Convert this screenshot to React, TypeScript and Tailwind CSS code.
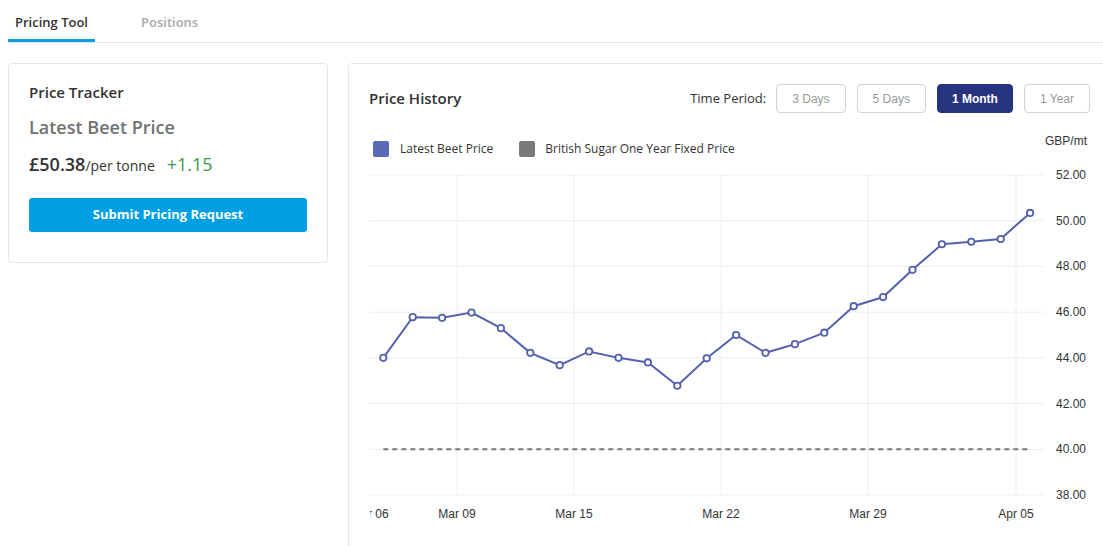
import React from 'react'

const prices = [
  44.0, 45.78, 45.75, 45.98, 45.3, 44.22, 43.68, 44.28, 44.0, 43.8, 42.78, 43.98, 45.0, 44.22,
  44.6, 45.1, 46.26, 46.66, 47.85, 48.97, 49.08, 49.2, 50.34,
]

const yTicks = [52, 50, 48, 46, 44, 42, 40, 38]
const xTicks = [
  { label: 'Mar 06', x: 0 },
  { label: 'Mar 09', x: 88 },
  { label: 'Mar 15', x: 205 },
  { label: 'Mar 22', x: 352 },
  { label: 'Mar 29', x: 499 },
  { label: 'Apr 05', x: 647 },
]

// plot area: left 369, top 174 in page coords
const W = 675
const H = 320
const yOf = (v: number) => ((52 - v) / 14) * H
const xOf = (i: number) => 14.3 + i * 29.4

function PriceChart() {
  const path = prices.map((p, i) => `${i === 0 ? 'M' : 'L'} ${xOf(i)},${yOf(p)}`).join(' ')
  return (
    <div className="relative h-[360px] w-[740px] font-['Liberation_Sans',Arial,sans-serif] text-[12px] text-[#333]">
      <span className="absolute left-[676px] top-[-40px] leading-none">GBP/mt</span>
      <svg width={W} height={H + 2} className="absolute left-0 top-0 overflow-visible">
        {yTicks.map((t) => (
          <line key={t} x1={0} x2={W} y1={yOf(t)} y2={yOf(t)} stroke="#eeeeee" strokeWidth="1" />
        ))}
        {xTicks.slice(1).map((t) => (
          <line key={t.label} x1={t.x} x2={t.x} y1={0} y2={H} stroke="#eeeeee" strokeWidth="1" />
        ))}
        <line x1={xOf(0)} x2={xOf(prices.length - 1)} y1={yOf(40)} y2={yOf(40)} stroke="#777" strokeWidth="2" strokeDasharray="5 4" />
        <path d={path} fill="none" stroke="#5462ad" strokeWidth="2" />
        {prices.map((p, i) => (
          <circle key={i} cx={xOf(i)} cy={yOf(p)} r="3.2" fill="#fff" stroke="#5462ad" strokeWidth="1.8" />
        ))}
      </svg>
      {yTicks.map((t) => (
        <span key={t} className="absolute left-[687px] leading-none" style={{ top: yOf(t) - 6 }}>
          {t.toFixed(2)}
        </span>
      ))}
      <div className="absolute left-[1px] top-[333px] h-[16px] w-[700px] overflow-hidden">
        {xTicks.map((t) => (
          <span
            key={t.label}
            className="absolute top-0 -translate-x-1/2 whitespace-nowrap leading-none"
            style={{ left: t.x === 0 ? 0 : t.x - 1 }}
          >
            {t.label}
          </span>
        ))}
      </div>
    </div>
  )
}

export default function App() {
  const periods = ['3 Days', '5 Days', '1 Month', '1 Year']
  return (
    <div className="h-[546px] w-[1103px] overflow-hidden bg-white font-['Open_Sans',sans-serif] text-[#333]">
      {/* tabs */}
      <div className="ml-2 flex h-[43px] border-b border-[#e8e8e8]">
        <div className="flex h-full w-[87px] items-center justify-center border-b-[3px] border-[#0a9be0] pt-[6px] text-[13px] font-semibold text-[#333]">
          Pricing Tool
        </div>
        <div className="flex h-full items-center pl-[46px] pt-[3px] text-[13px] font-semibold text-[#aaa]">Positions</div>
      </div>

      <div className="flex gap-[20px] pl-2 pt-5">
        {/* left card */}
        <div className="h-[200px] w-[320px] shrink-0 rounded border border-[#e6e6e6] px-[20px] pt-[16px]">
          <div className="text-[15px] font-semibold leading-[24px] text-[#333]">Price Tracker</div>
          <div className="mt-[11px] text-[18px] font-semibold leading-[24px] text-[#727272]">Latest Beet Price</div>
          <div className="mt-[13px] flex items-baseline leading-[24px]">
            <span className="text-[18px] font-semibold text-[#333]">£50.38</span>
            <span className="text-[14px] text-[#333]">/per tonne</span>
            <span className="ml-[12px] text-[18px] font-medium text-[#3d9a4b]">+1.15</span>
          </div>
          <button className="mt-[20px] h-[34px] w-[278px] rounded-[3px] bg-[#009fe3] text-[13px] font-bold text-white">
            Submit Pricing Request
          </button>
        </div>

        {/* right card */}
        <div className="h-[520px] w-[780px] shrink-0 rounded border border-[#e6e6e6] pl-[20px] pt-[20px]">
          <div className="flex items-center pr-[37px]">
            <div className="flex-1 text-[15px] font-semibold text-[#333]">Price History</div>
            <span className="mr-[10px] text-[13px] text-[#333]">Time Period:</span>
            <div className="flex gap-[11px]">
              {periods.map((p) => (
                <button
                  key={p}
                  className={
                    p === '1 Month'
                      ? 'h-[29px] rounded-[4px] border border-[#28337f] bg-[#28337f] px-[14px] font-["Liberation_Sans",Arial,sans-serif] text-[12px] font-bold text-white'
                      : 'h-[29px] rounded-[4px] border border-[#d4d4d4] bg-white px-[15px] font-["Liberation_Sans",Arial,sans-serif] text-[12px] text-[#999]'
                  }
                >
                  {p}
                </button>
              ))}
            </div>
          </div>

          <div className="mt-[27px] flex items-center pl-[4px] text-[12px] text-[#333]">
            <span className="h-[16px] w-[16px] rounded-[2px] bg-[#5b6ab4]" />
            <span className="ml-[11px]">Latest Beet Price</span>
            <span className="ml-[26px] h-[16px] w-[16px] rounded-[2px] bg-[#7a7a7a]" />
            <span className="ml-[10px]">British Sugar One Year Fixed Price</span>
          </div>

          <div className="mt-[17px]">
            <PriceChart />
          </div>
        </div>
      </div>
    </div>
  )
}
